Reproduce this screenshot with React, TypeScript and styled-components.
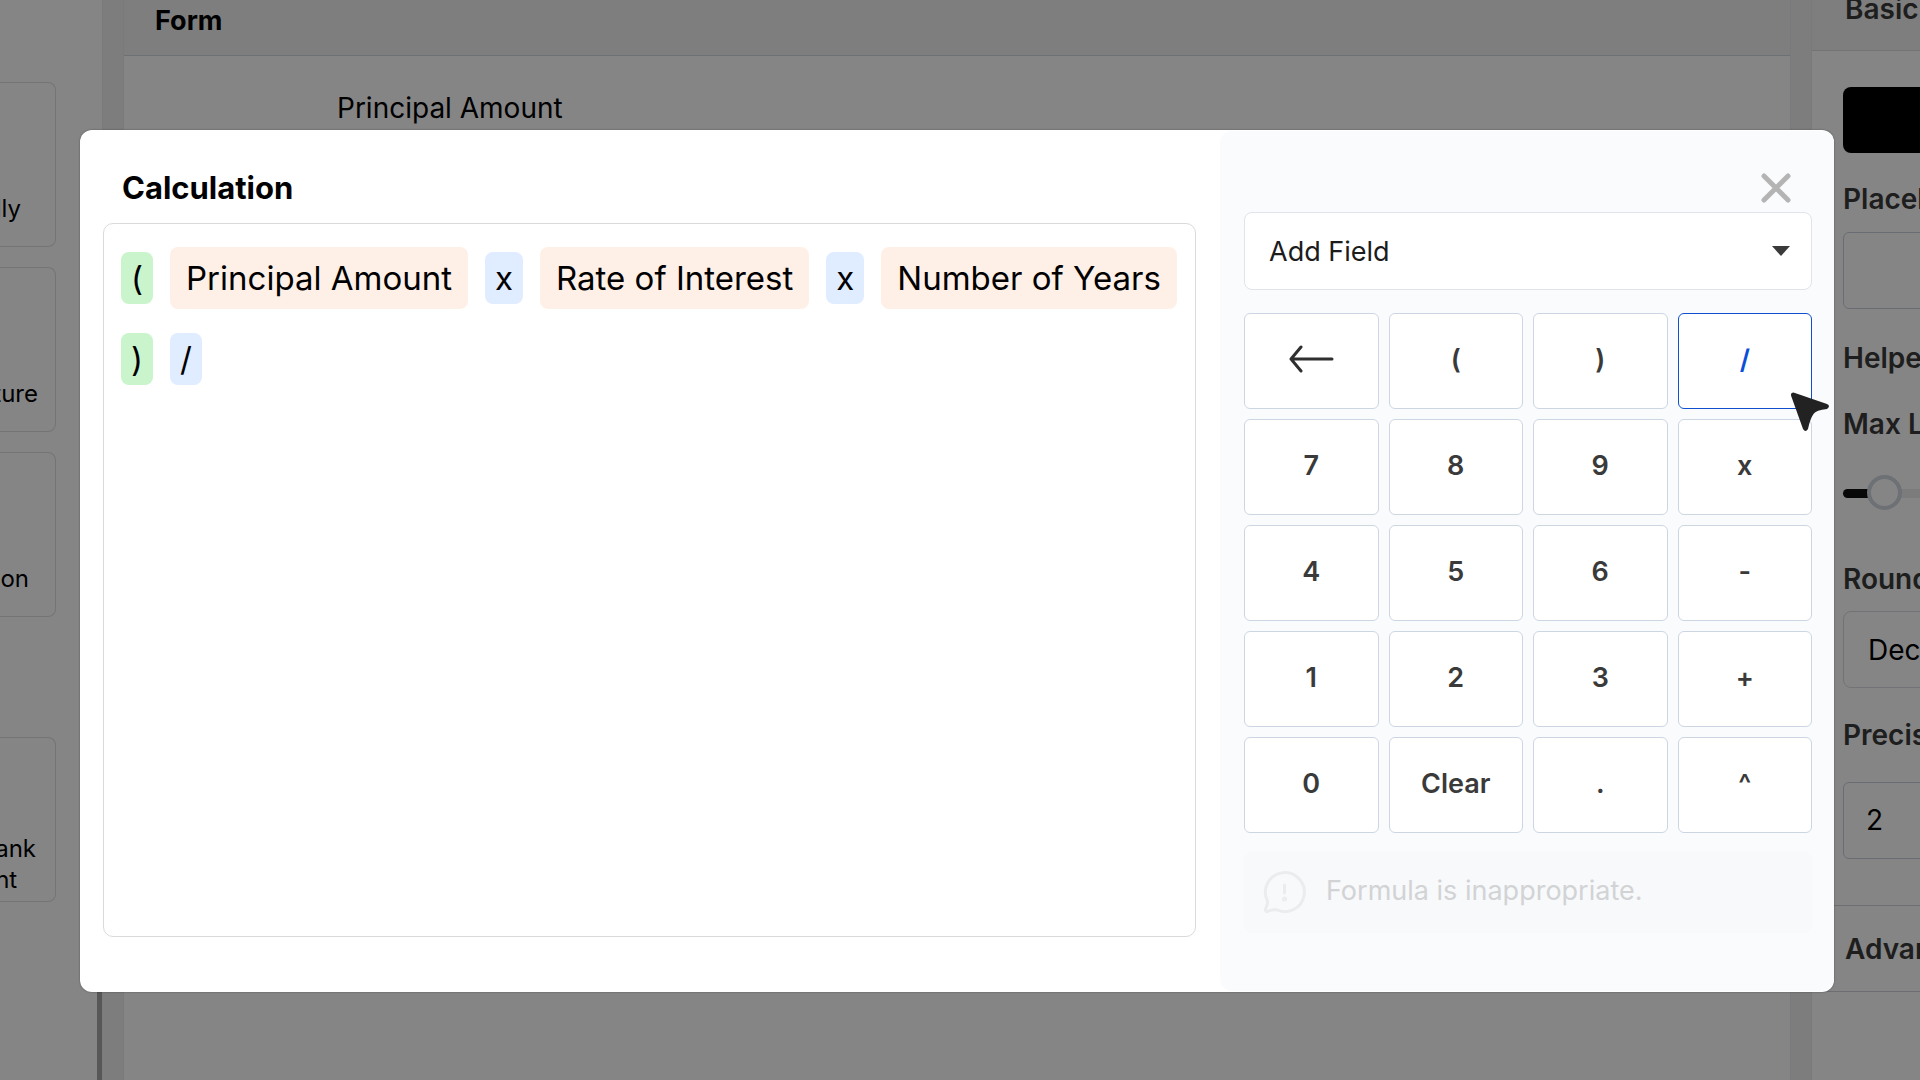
import React from "react";
import styled, { createGlobalStyle } from "styled-components";

const GlobalStyle = createGlobalStyle`
  *, *::before, *::after { box-sizing: border-box; }
  body { margin: 0; overflow: hidden; font-family: Inter, "Liberation Sans", sans-serif; color: #000; background: #f0f0f0; }
  button, input, select { font: inherit; color: inherit; }
  h1, h2, p { margin: 0; }
`;

const Page = styled.div`
  position: relative;
  height: 100vh;
  overflow: hidden;
`;

const Workspace = styled.div`
  display: grid;
  grid-template-columns: 103px minmax(0, 1fr) 109px;
  gap: 20px;
  height: 100%;
`;

const Palette = styled.aside`
  display: flex;
  justify-content: space-between;
  border-right: 1px solid #ececec;
  background: #fff;
  overflow: hidden;
`;

const PaletteCards = styled.div`
  display: flex;
  flex-direction: column;
  gap: 20px;
  width: 56px;
  padding-top: 82px;
`;

const PaletteCard = styled.div<{ $section?: boolean; $end: number }>`
  display: flex;
  justify-content: flex-end;
  align-items: flex-end;
  height: 165px;
  margin-top: ${(p) => (p.$section ? "100px" : "0")};
  padding: 0 ${(p) => p.$end}px ${(p) => (p.$section ? 6 : 22)}px 0;
  border: 1px solid #dedede;
  border-left: 0;
  border-radius: 0 8px 8px 0;
  font-size: 24px;
  line-height: 31px;
  white-space: pre;
`;

const ScrollThumb = styled.div`
  width: 5px;
  height: 100%;
  margin-top: 800px;
  background: #a8a8a8;
`;

const FormPanel = styled.main`
  border: 1px solid #e8eaec;
  border-width: 0 1px;
  background: #fff;
`;

const FormHeader = styled.header`
  display: flex;
  align-items: center;
  height: 56px;
  padding: 0 0 13px 31px;
  border-bottom: 1px solid #d4d8dd;
  background: #f1f1f1;
`;

const FormTitle = styled.h2`
  font-size: 27px;
  line-height: 32px;
  font-weight: 700;
`;

const FormLabel = styled.p`
  padding: 36px 0 0 213px;
  font-size: 28px;
  line-height: 32px;
`;

const Settings = styled.aside`
  border-left: 1px solid #e8eaec;
  background: #fff;
  color: #3a3a3a;
  font-size: 28px;
  line-height: 32px;
  white-space: nowrap;
  overflow: hidden;
`;

const SettingsHeader = styled.header`
  display: flex;
  align-items: center;
  height: 51px;
  padding: 0 0 32px 33px;
  border-bottom: 1px solid #dcdcdc;
  background: #f1f1f1;
`;

const SettingsTitle = styled.h2`
  font-size: 28px;
  line-height: 32px;
  font-weight: 600;
`;

const SettingsBody = styled.div`
  display: flex;
  flex-direction: column;
  width: 360px;
  padding: 36px 0 46px 31px;
`;

const BlackButton = styled.button`
  height: 66px;
  border: 0;
  border-radius: 8px;
  background: #000;
`;

const Label = styled.label<{ $top: number; $bottom?: number }>`
  margin-top: ${(p) => p.$top}px;
  margin-bottom: ${(p) => p.$bottom ?? 0}px;
  font-weight: 600;
`;

const TextBox = styled.input`
  height: 77px;
  padding: 0 22px 2px;
  border: 1px solid #c9d1dc;
  border-radius: 6px;
  background: #fff;
  color: #000;
`;

const RoundSelect = styled.select`
  height: 77px;
  padding: 0 24px;
  border: 1px solid #d8dde2;
  border-radius: 8px;
  background: #fff;
  color: #000;
  appearance: none;
`;

const Range = styled.input`
  appearance: none;
  height: 36px;
  margin: 0;
  background: transparent;
  &::-webkit-slider-runnable-track {
    height: 9px;
    border-radius: 5px;
    background: linear-gradient(to right, #111 40px, #ededed 40px);
  }
  &::-webkit-slider-thumb {
    appearance: none;
    width: 35px;
    height: 35px;
    margin-top: -14px;
    border: 4px solid #d2d6de;
    border-radius: 50%;
    background: #fff;
  }
`;

const Advanced = styled.div`
  display: flex;
  align-items: center;
  height: 87px;
  padding-left: 33px;
  border: 1px solid #cfd3da;
  border-width: 1px 0;
  font-weight: 600;
`;

const Overlay = styled.div`
  position: absolute;
  inset: 0;
  padding: 130px 86px 0 80px;
  background: rgba(0, 0, 0, 0.48);
`;

const Modal = styled.section`
  position: relative;
  display: grid;
  grid-template-columns: minmax(0, 1fr) 614px;
  padding: 1px 0;
  border-radius: 12px;
  background: #fff;
  box-shadow: 0 0 2px rgba(0, 0, 0, 0.4);
`;

const EditorSide = styled.div`
  display: flex;
  flex-direction: column;
  padding: 39px 24px 54px 23px;
`;

const ModalTitle = styled.h1`
  padding-left: 19px;
  font-size: 31px;
  line-height: 36px;
  font-weight: 700;
`;

const Formula = styled.div`
  display: flex;
  flex: 1;
  flex-wrap: wrap;
  align-items: center;
  align-content: flex-start;
  gap: 24px 17px;
  margin-top: 17px;
  padding: 23px 17px;
  border: 1px solid #d9dadc;
  border-radius: 10px;
  font-size: 33px;
`;

const Chip = styled.span<{ $kind: "field" | "op" | "paren" }>`
  height: ${(p) => (p.$kind === "field" ? 62 : 52)}px;
  padding: 0 ${(p) => (p.$kind === "field" ? 16 : 10)}px;
  border-radius: 8px;
  line-height: ${(p) => (p.$kind === "field" ? 62 : 52)}px;
  background: ${(p) => ({ field: "#fff0e7", op: "#e0ecff", paren: "#caf4cc" })[p.$kind]};
`;

const PadSide = styled.div`
  display: flex;
  flex-direction: column;
  padding: 36px 22px 58px 24px;
  border-radius: 12px;
  background: #fafbfd;
`;

const CloseButton = styled.button`
  display: flex;
  align-self: flex-end;
  margin: 0 15px 3px 0;
  padding: 0;
  border: 0;
  background: none;
`;

const FieldPicker = styled.div`
  display: grid;
  align-items: center;
  & > * { grid-area: 1 / 1; }
  & > svg { justify-self: end; margin-right: 22px; pointer-events: none; }
`;

const FieldSelect = styled.select`
  height: 78px;
  padding: 0 24px;
  border: 1px solid #dfe4eb;
  border-radius: 8px;
  background: #fff;
  color: #1c1c1c;
  font-size: 27px;
  appearance: none;
`;

const Keys = styled.div`
  display: grid;
  grid-template-columns: repeat(4, 1fr);
  gap: 10px;
  margin: 23px 0 19px;
`;

const Key = styled.button<{ $active?: boolean }>`
  display: flex;
  align-items: center;
  justify-content: center;
  height: 96px;
  padding: 0 0 4px;
  border: 1px solid ${(p) => (p.$active ? "#0f4fd0" : "#ccd6e2")};
  border-radius: 6px;
  background: #fff;
  color: ${(p) => (p.$active ? "#0b4fd8" : "#3a3a3a")};
  font-size: 27px;
  font-weight: 600;
`;

const Message = styled.p`
  display: flex;
  align-items: center;
  gap: 20px;
  height: 81px;
  padding: 0 19px;
  border-radius: 8px;
  background: #f8f9fb;
  color: #d2d3d5;
  font-size: 27px;
`;

const MessageText = styled.span`
  padding-bottom: 5px;
`;

const Cursor = styled.svg`
  position: absolute;
  right: 4px;
  top: 262px;
`;

const chips: { kind: "field" | "op" | "paren"; text: string }[] = [
  { kind: "paren", text: "(" },
  { kind: "field", text: "Principal Amount" },
  { kind: "op", text: "x" },
  { kind: "field", text: "Rate of Interest" },
  { kind: "op", text: "x" },
  { kind: "field", text: "Number of Years" },
  { kind: "paren", text: ")" },
  { kind: "op", text: "/" },
];

const keys = ["back", "(", ")", "/", "7", "8", "9", "x", "4", "5", "6", "-", "1", "2", "3", "+", "0", "Clear", ".", "^"];

const BackArrow = () => (
  <svg width="46" height="28" viewBox="0 0 46 28" fill="none" stroke="#2f2f2f" strokeWidth="3" strokeLinecap="round" strokeLinejoin="round">
    <path d="M44 14H3M13 2L3 14l10 12" />
  </svg>
);

export default function App() {
  return (
    <Page>
      <GlobalStyle />
      <Workspace>
        <Palette>
          <PaletteCards>
            <PaletteCard $end={34}>lly</PaletteCard>
            <PaletteCard $end={17}>ture</PaletteCard>
            <PaletteCard $end={26}>on</PaletteCard>
            <PaletteCard $section $end={19}>{"ank\nnt"}</PaletteCard>
          </PaletteCards>
          <ScrollThumb />
        </Palette>
        <FormPanel>
          <FormHeader>
            <FormTitle>Form</FormTitle>
          </FormHeader>
          <FormLabel>Principal Amount</FormLabel>
        </FormPanel>
        <Settings>
          <SettingsHeader>
            <SettingsTitle>Basic</SettingsTitle>
          </SettingsHeader>
          <SettingsBody>
            <BlackButton type="button" aria-label="Calculation" />
            <Label htmlFor="placeholder" $top={30} $bottom={17}>Placeholder</Label>
            <TextBox id="placeholder" />
            <Label as="p" $top={33}>Helper</Label>
            <Label htmlFor="max" $top={34} $bottom={35}>Max Length</Label>
            <Range id="max" type="range" min={0} max={100} defaultValue={8} />
            <Label htmlFor="round" $top={52} $bottom={16}>Rounding</Label>
            <RoundSelect id="round"><option>Decimal</option></RoundSelect>
            <Label htmlFor="precision" $top={31} $bottom={31}>Precision</Label>
            <TextBox id="precision" defaultValue="2" />
          </SettingsBody>
          <Advanced>Advanced</Advanced>
        </Settings>
      </Workspace>
      <Overlay>
        <Modal role="dialog" aria-labelledby="modal-title">
          <EditorSide>
            <ModalTitle id="modal-title">Calculation</ModalTitle>
            <Formula>
              {chips.map((c, i) => (
                <Chip key={i} $kind={c.kind}>{c.text}</Chip>
              ))}
            </Formula>
          </EditorSide>
          <PadSide>
            <CloseButton type="button" aria-label="Close">
              <svg width="42" height="42" viewBox="0 0 42 42" stroke="#b4b4b4" strokeWidth="5" strokeLinecap="round">
                <path d="M9 9l24 24M33 9L9 33" />
              </svg>
            </CloseButton>
            <FieldPicker>
              <FieldSelect aria-label="Add Field"><option>Add Field</option></FieldSelect>
              <svg width="18" height="10" viewBox="0 0 18 10"><path d="M0 0h18L9 10z" fill="#3a3a3a" /></svg>
            </FieldPicker>
            <Keys>
              {keys.map((k) => (
                <Key key={k} type="button" $active={k === "/"} aria-label={k === "back" ? "Backspace" : undefined}>
                  {k === "back" ? <BackArrow /> : k}
                </Key>
              ))}
            </Keys>
            <Message role="status">
              <svg width="43" height="43" viewBox="0 0 43 43" fill="none" stroke="#ebecee" strokeWidth="3" strokeLinecap="round" strokeLinejoin="round">
                <path d="M4.500 30A19.500 19.500 0 1 1 13 38.500Q9 38.500 4.500 40.500Q2 41 2.500 38Q5 33 4.500 30Z" />
                <path d="M21.500 14v8" />
                <circle cx="21.500" cy="28" r="1" />
              </svg>
              <MessageText>Formula is inappropriate.</MessageText>
            </Message>
          </PadSide>
          <Cursor width="40" height="42" viewBox="0 0 40 42">
            <path d="M3.500 0.500L37 12Q41 14 37 17Q26 18 23.500 22Q20 27 18 37Q15.500 41 13 37L1 3.500Q0.500 0.500 3.500 0.500Z" fill="#222" />
          </Cursor>
        </Modal>
      </Overlay>
    </Page>
  );
}
